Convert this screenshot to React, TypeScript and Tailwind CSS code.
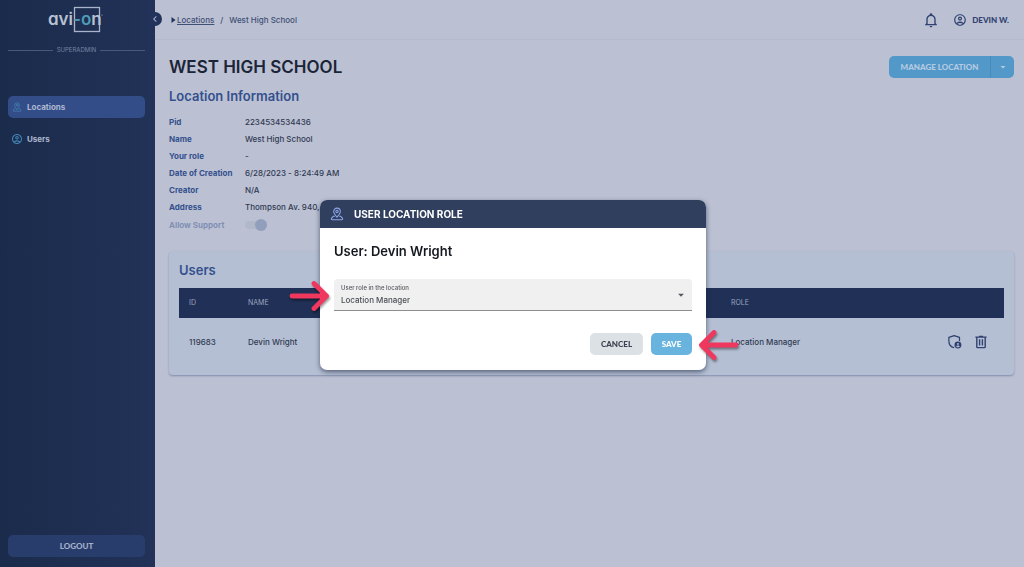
import { ReactNode } from "react";
import { MdArrowDropDown, MdChevronLeft, MdOutlineAccountCircle } from "react-icons/md";

type InfoRow = {
    label: string;
    value: string;
};

type NavItem = {
    name: string;
    icon: ReactNode;
    active: boolean;
};

const locationInfo: InfoRow[] = [
    { label: "Pid", value: "2234534534436" },
    { label: "Name", value: "West High School" },
    { label: "Your role", value: "-" },
    { label: "Date of Creation", value: "6/28/2023 - 8:24:49 AM" },
    { label: "Creator", value: "N/A" },
    { label: "Address", value: "Thompson Av. 940, West" },
];

const users = [{ id: "119683", name: "Devin Wright", role: "Location Manager" }];

function PinIcon({ className }: { className: string }) {
    return (
        <svg viewBox="0 0 24 24" fill="none" stroke="currentColor" strokeWidth="1.8" strokeLinecap="round" strokeLinejoin="round" className={className}>
            <path d="M12 17.5C9 14 6.3 11 6.3 7.6a5.7 5.7 0 0 1 11.4 0C17.7 11 15 14 12 17.5Z" />
            <circle cx="12" cy="7.6" r="2" />
            <path d="M7.5 16H5.5L2.5 19.5c-.6 1.2 0 2.5 1.5 2.5h16c1.5 0 2.1-1.3 1.5-2.5L18.5 16h-2" />
        </svg>
    );
}

function BellIcon({ className }: { className: string }) {
    return (
        <svg viewBox="0 0 24 24" fill="currentColor" className={className}>
            <path d="M10 21H14C14 22.1 13.1 23 12 23S10 22.1 10 21M21 19V20H3V19L5 17V11C5 7.9 7 5.2 10 4.3V4C10 2.9 10.9 2 12 2S14 2.9 14 4V4.3C17 5.2 19 7.9 19 11V17L21 19M17 11C17 8.2 14.8 6 12 6S7 8.2 7 11V18H17V11Z" />
        </svg>
    );
}

function ShieldUserIcon({ className }: { className: string }) {
    return (
        <svg viewBox="0 0 24 24" className={className}>
            <path d="M20 11V5.5L11.5 2.5 3 5.5V11c0 5 3.5 9.6 8.5 11" fill="none" stroke="currentColor" strokeWidth="2" strokeLinejoin="round" />
            <circle cx="17.5" cy="17.5" r="5.5" fill="currentColor" />
            <circle cx="17.5" cy="15.8" r="1.5" fill="#b5bfd3" />
            <path d="M14.7 19.8c.6-2 5-2 5.6 0-.7 1-1.7 1.5-2.8 1.5s-2.1-.5-2.8-1.5Z" fill="#b5bfd3" />
        </svg>
    );
}

function TrashIcon({ className }: { className: string }) {
    return (
        <svg viewBox="3 2 18 20" fill="currentColor" className={className}>
            <path d="M9,3V4H4V6H5V19A2,2 0 0,0 7,21H17A2,2 0 0,0 19,19V6H20V4H15V3H9M7,6H17V19H7V6M9,8V17H11V8H9M13,8V17H15V8H13Z" />
        </svg>
    );
}

function PointerArrow({ className }: { className: string }) {
    return (
        <svg viewBox="0 0 44 34" fill="none" stroke="#f0385f" strokeWidth="4.8" strokeLinecap="round" strokeLinejoin="round" className={className}>
            <path d="M4 17H38M26 4.5L38.5 17L26 29.5" />
        </svg>
    );
}

function Logo() {
    return (
        <svg viewBox="0 0 60 28" className="h-7 w-[60px] font-['Inter',sans-serif] text-[17px] font-semibold [font-feature-settings:'cv11']" role="img" aria-label="avi-on">
            <rect x="27.5" y="2.5" width="25" height="24" fill="none" stroke="#a9b3c9" strokeWidth="1.3" />
            <text x="1" y="20" fill="#b9c1d3">
                avi<tspan fill="#4e9bb5">-o</tspan>n
            </text>
            <circle cx="55" cy="10" r="0.6" fill="#a9b3c9" />
        </svg>
    );
}

function Sidebar() {
    const navItems: NavItem[] = [
        { name: "Locations", icon: <PinIcon className="size-[10px]" />, active: true },
        { name: "Users", icon: <MdOutlineAccountCircle className="size-3" />, active: false },
    ];
    return (
        <aside className="relative flex w-[155px] shrink-0 flex-col bg-linear-to-r from-[#1a2b4b] to-[#223258] pr-[10px] pb-[10px] pl-2">
            <div className="flex justify-center pt-[5px]">
                <Logo />
            </div>
            <div className="mt-[11px] flex items-center gap-1 text-[6px] leading-3 text-[#7584a4]">
                <span className="h-px flex-1 bg-[#485a7c]" />
                SUPERADMIN
                <span className="h-px flex-1 bg-[#485a7c]" />
            </div>
            <nav className="mt-10 flex flex-col gap-[10px]">
                {navItems.map((item) => (
                    <a
                        key={item.name}
                        href="#"
                        className={`flex h-[22px] items-center gap-1 rounded-[5px] px-[3px] text-[8px] font-bold text-[#aeb8d0] ${item.active ? "bg-[#334d89]" : ""}`}
                    >
                        <span className="flex w-3 justify-center text-[#4384b4]">{item.icon}</span>
                        {item.name}
                    </a>
                ))}
            </nav>
            <button className="mt-auto h-[22px] rounded-[5px] bg-[#293d6d] font-['Lato',sans-serif] text-[8px] font-black text-[#a5b0ca]">LOGOUT</button>
            <button aria-label="Collapse sidebar" className="absolute top-3 -right-[7px] flex size-[14px] items-center justify-center rounded-full bg-[#22335c] text-[#a5b0ca]">
                <MdChevronLeft className="size-3" />
            </button>
        </aside>
    );
}

function TopBar() {
    return (
        <header className="flex h-10 items-center justify-between border-b border-[#b4bacd] pr-[15px] pl-4">
            <div className="flex items-center text-[8px] font-medium text-[#3f4f76]">
                <svg viewBox="0 0 5 6" className="mr-px h-[6px] w-[5px] fill-[#22335c]">
                    <path d="M0.5 0L4.5 3L0.5 6Z" />
                </svg>
                <a href="#" className="underline">Locations</a>
                <span className="mx-[6px]">/</span>
                <span>West High School</span>
            </div>
            <div className="flex items-center text-[#2f4170]">
                <button aria-label="Notifications"><BellIcon className="size-4" /></button>
                <button className="ml-[14px] flex items-center gap-[5px] font-['Lato',sans-serif] text-[8px] font-black">
                    <MdOutlineAccountCircle className="size-[14px]" />
                    DEVIN W.
                </button>
            </div>
        </header>
    );
}

function LocationDetails() {
    return (
        <section>
            <h2 className="mt-2 text-[13px] leading-5 font-semibold text-[#34508d]">Location Information</h2>
            <dl className="mt-2 text-[8px] leading-[17px]">
                {locationInfo.map((row) => (
                    <div key={row.label} className="flex">
                        <dt className="w-[76px] font-bold text-[#34508d]">{row.label}</dt>
                        <dd className="font-medium text-[#303a52]">{row.value}</dd>
                    </div>
                ))}
            </dl>
            <div className="flex h-[18px] items-center text-[8px]">
                <label htmlFor="support" className="w-[76px] font-bold text-[#8090b4]">Allow Support</label>
                <input
                    id="support"
                    type="checkbox"
                    role="switch"
                    defaultChecked
                    disabled
                    className="relative h-2 w-[22px] appearance-none rounded-full bg-[#b0b8ca] before:absolute before:-top-[2px] before:right-0 before:size-3 before:rounded-full before:bg-[#929fbc]"
                />
            </div>
        </section>
    );
}

function UsersCard() {
    return (
        <section className="mt-[17px] rounded-[4px] bg-[#b5bfd3] px-[10px] pb-[10px] shadow-[0_1px_2px_rgba(60,75,120,0.45)]">
            <h2 className="pt-[9px] pb-2 text-[13px] leading-5 font-semibold text-[#34508d]">Users</h2>
            <table className="w-full text-left text-[8px]">
                <thead>
                    <tr className="h-[30px] bg-[#213056] text-[7px] text-[#9aa5c0]">
                        <th className="w-[59px] pl-[10px] font-normal">ID</th>
                        <th className="w-[483px] pl-[10px] font-normal">NAME</th>
                        <th className="pl-[10px] font-normal">ROLE</th>
                        <th aria-label="Actions" />
                    </tr>
                </thead>
                <tbody>
                    {users.map((user) => (
                        <tr key={user.id} className="h-[47px] font-medium text-[#303a52]">
                            <td className="pl-[10px]">{user.id}</td>
                            <td className="pl-[10px]">{user.name}</td>
                            <td className="pl-[10px]">{user.role}</td>
                            <td className="pr-4">
                                <div className="flex justify-end gap-3 text-[#2f4170]">
                                    <button aria-label="Edit role"><ShieldUserIcon className="size-[15px]" /></button>
                                    <button aria-label="Delete user"><TrashIcon className="size-[14px]" /></button>
                                </div>
                            </td>
                        </tr>
                    ))}
                </tbody>
            </table>
        </section>
    );
}

function RoleDialog() {
    return (
        <div className="fixed inset-0 flex items-center justify-center pt-[3px] pl-[2px]">
            <div role="dialog" aria-labelledby="dialog-title" className="relative w-[386px] rounded-[7px] bg-white shadow-[0_2px_5px_rgba(20,30,60,0.6)]">
                <div className="flex h-7 items-center gap-[10px] rounded-t-[7px] bg-[#313f5f] px-[10px]">
                    <PinIcon className="size-[14px] text-[#8ea5e8]" />
                    <h2 id="dialog-title" className="text-[10px] font-bold text-white">USER LOCATION ROLE</h2>
                </div>
                <div className="px-[14px] pt-[13px] pb-[15px]">
                    <h3 className="text-[13px] leading-5 font-semibold text-[#15181f]">User: Devin Wright</h3>
                    <div className="relative mt-[18px]">
                        <label htmlFor="role" className="absolute top-[5px] left-[7px] text-[6px] leading-2 font-medium text-[#55585f]">User role in the location</label>
                        <select id="role" className="h-8 w-full appearance-none rounded-t-[4px] border-b border-[#8d8d8d] bg-[#f0f0f0] px-[7px] pt-[10px] text-[8px] font-medium text-[#4a4d55]">
                            <option>Location Manager</option>
                        </select>
                        <MdArrowDropDown className="pointer-events-none absolute top-[9px] right-[4px] size-[14px] text-[#55585f]" />
                    </div>
                    <div className="mt-[22px] flex justify-end gap-2 font-['Lato',sans-serif] text-[8px] font-black">
                        <button className="h-[22px] w-[53px] rounded-[5px] bg-[#dbe1e4] text-[#3c4250]">CANCEL</button>
                        <button className="h-[22px] w-[41px] rounded-[5px] bg-[#68b4de] text-white">SAVE</button>
                    </div>
                </div>
                <PointerArrow className="absolute top-[79px] -left-[32px] h-[34px] w-11 drop-shadow-[1px_2px_1px_rgba(0,0,0,0.4)]" />
                <PointerArrow className="absolute top-[128px] -right-[34px] h-[34px] w-11 rotate-180 drop-shadow-[-1px_-2px_1px_rgba(0,0,0,0.4)]" />
            </div>
        </div>
    );
}

export default function App() {
    return (
        <div className="flex min-h-screen bg-[#bbc0d2] font-['Inter',sans-serif]">
            <Sidebar />
            <main className="min-w-0 flex-1">
                <TopBar />
                <div className="pr-[10px] pl-[14px]">
                    <div className="flex items-center justify-between pt-4">
                        <h1 className="text-[17px] leading-[22px] font-semibold text-[#1b2538]">WEST HIGH SCHOOL</h1>
                        <div className="flex h-[22px] overflow-hidden rounded-[5px] bg-[#5298c8] font-['Lato',sans-serif] text-[8px] font-black text-[#b4cbe2]">
                            <button className="w-[101px]">MANAGE LOCATION</button>
                            <button aria-label="More actions" className="flex w-6 items-center justify-center border-l border-[#4a8bbd]">
                                <MdArrowDropDown className="size-3" />
                            </button>
                        </div>
                    </div>
                    <LocationDetails />
                    <UsersCard />
                </div>
            </main>
            <RoleDialog />
        </div>
    );
}
